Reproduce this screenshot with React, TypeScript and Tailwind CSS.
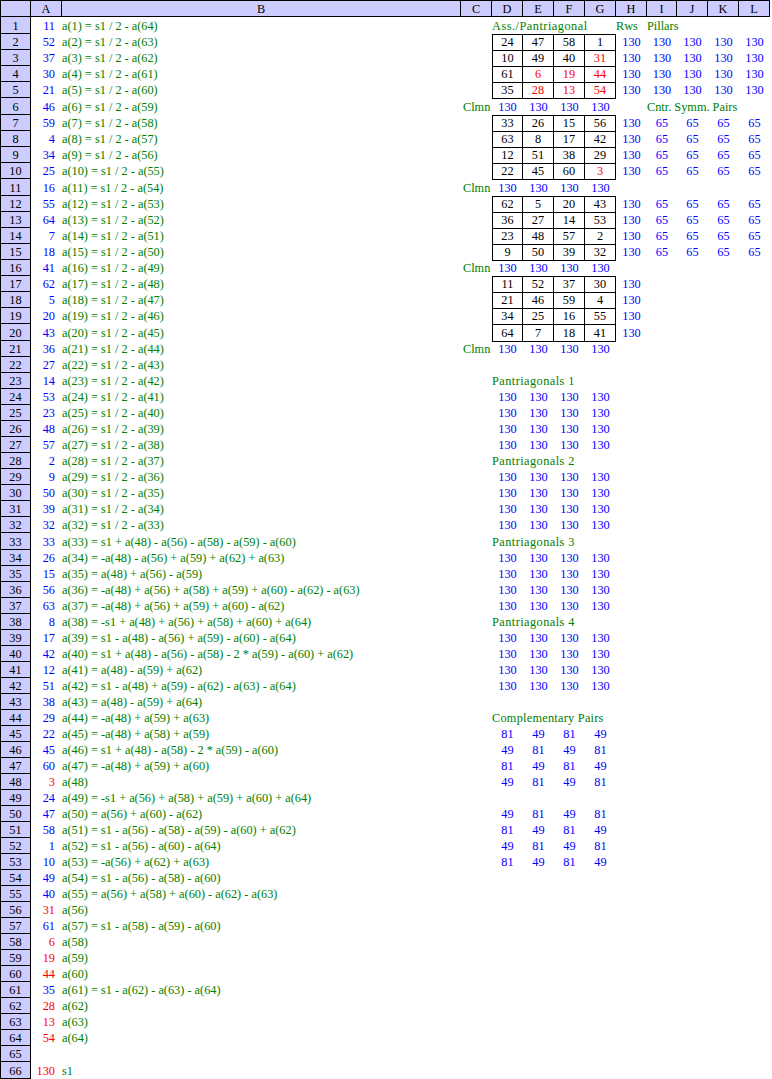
const COLS = ['A', 'B', 'C', 'D', 'E', 'F', 'G', 'H', 'I', 'J', 'K', 'L'];

const GRID = 'grid grid-cols-[31px_31px_399px_31px_31px_31px_31px_31px_31px_30px_31px_31px_31px]';

const A_VALUES = [
  11, 52, 37, 30, 21, 46, 59, 4, 34, 25, 16, 55, 64, 7, 18, 41, 62, 5, 20, 43, 36, 27, 14, 53, 23, 48, 57, 2, 9, 50, 39, 32,
  33, 26, 15, 56, 63, 8, 17, 42, 12, 51, 38, 29, 22, 45, 60, 3, 24, 47, 58, 1, 10, 49, 40, 31, 61, 6, 19, 44, 35, 28, 13, 54,
];
const RED_A = [48, 56, 58, 59, 60, 62, 63, 64];

const FORMULAS: Record<number, string> = {
  33: 'a(33) = s1 + a(48) - a(56) - a(58) - a(59) - a(60)',
  34: 'a(34) = -a(48) - a(56) + a(59) + a(62) + a(63)',
  35: 'a(35) = a(48) + a(56) - a(59)',
  36: 'a(36) = -a(48) + a(56) + a(58) + a(59) + a(60) - a(62) - a(63)',
  37: 'a(37) = -a(48) + a(56) + a(59) + a(60) - a(62)',
  38: 'a(38) = -s1 + a(48) + a(56) + a(58) + a(60) + a(64)',
  39: 'a(39) = s1 - a(48) - a(56) + a(59) - a(60) - a(64)',
  40: 'a(40) = s1 + a(48) - a(56) - a(58) - 2 * a(59) - a(60) + a(62)',
  41: 'a(41) = a(48) - a(59) + a(62)',
  42: 'a(42) = s1 - a(48) + a(59) - a(62) - a(63) - a(64)',
  43: 'a(43) = a(48) - a(59) + a(64)',
  44: 'a(44) = -a(48) + a(59) + a(63)',
  45: 'a(45) = -a(48) + a(58) + a(59)',
  46: 'a(46) = s1 + a(48) - a(58) - 2 * a(59) - a(60)',
  47: 'a(47) = -a(48) + a(59) + a(60)',
  48: 'a(48)',
  49: 'a(49) = -s1 + a(56) + a(58) + a(59) + a(60) + a(64)',
  50: 'a(50) = a(56) + a(60) - a(62)',
  51: 'a(51) = s1 - a(56) - a(58) - a(59) - a(60) + a(62)',
  52: 'a(52) = s1 - a(56) - a(60) - a(64)',
  53: 'a(53) = -a(56) + a(62) + a(63)',
  54: 'a(54) = s1 - a(56) - a(58) - a(60)',
  55: 'a(55) = a(56) + a(58) + a(60) - a(62) - a(63)',
  56: 'a(56)',
  57: 'a(57) = s1 - a(58) - a(59) - a(60)',
  58: 'a(58)',
  59: 'a(59)',
  60: 'a(60)',
  61: 'a(61) = s1 - a(62) - a(63) - a(64)',
  62: 'a(62)',
  63: 'a(63)',
  64: 'a(64)',
  66: 's1',
};

// magic square blocks, negative = red (input) cell
const SQUARE: Record<number, number[]> = {
  2: [24, 47, 58, 1],
  3: [10, 49, 40, -31],
  4: [61, -6, -19, -44],
  5: [35, -28, -13, -54],
  7: [33, 26, 15, 56],
  8: [63, 8, 17, 42],
  9: [12, 51, 38, 29],
  10: [22, 45, 60, -3],
  12: [62, 5, 20, 43],
  13: [36, 27, 14, 53],
  14: [23, 48, 57, 2],
  15: [9, 50, 39, 32],
  17: [11, 52, 37, 30],
  18: [21, 46, 59, 4],
  19: [34, 25, 16, 55],
  20: [64, 7, 18, 41],
};

const CLMN_ROWS = [6, 11, 16, 21];
const TALL_ROWS = [1, 6, 11, 20, 33, 66];

const D_LABELS: Record<number, { text: string; tracking: string }> = {
  1: { text: 'Ass./Pantriagonal', tracking: 'tracking-[0.5px]' },
  23: { text: 'Pantriagonals 1', tracking: 'tracking-[0.45px]' },
  28: { text: 'Pantriagonals 2', tracking: 'tracking-[0.45px]' },
  33: { text: 'Pantriagonals 3', tracking: 'tracking-[0.45px]' },
  38: { text: 'Pantriagonals 4', tracking: 'tracking-[0.45px]' },
  44: { text: 'Complementary Pairs', tracking: 'tracking-[0.25px]' },
};

const PAIRS: Record<number, number[]> = {
  45: [81, 49, 81, 49],
  46: [49, 81, 49, 81],
  47: [81, 49, 81, 49],
  48: [49, 81, 49, 81],
  50: [49, 81, 49, 81],
  51: [81, 49, 81, 49],
  52: [49, 81, 49, 81],
  53: [81, 49, 81, 49],
};

const PANTRI_ROWS = [24, 25, 26, 27, 29, 30, 31, 32, 34, 35, 36, 37, 39, 40, 41, 42];

function Label({ text, className = '' }: { text: string; className?: string }) {
  return <div className={`flex items-end pb-[2px] whitespace-nowrap text-[#008000] ${className}`}>{text}</div>;
}

function Num({ value, className = '' }: { value: number; className?: string }) {
  return <div className={`flex items-end justify-center pb-[2px] text-[#0000ff] ${className}`}>{value}</div>;
}

function SquareCell({ value, first }: { value: number; first: boolean }) {
  return (
    <div
      className={`flex items-end justify-center pb-[2px] border-t border-r border-black ${first ? 'border-l' : ''} ${value < 0 ? 'text-[#ff0000]' : 'text-black'}`}
    >
      {Math.abs(value)}
    </div>
  );
}

function RightPart({ row }: { row: number }) {
  const square = SQUARE[row];
  const isClmn = CLMN_ROWS.includes(row);
  const label = D_LABELS[row];

  let dg = null;
  let rest = null;

  if (square) {
    dg = square.map((v, i) => <SquareCell key={i} value={v} first={i === 0} />);
  } else if (isClmn) {
    dg = [0, 1, 2, 3].map((i) => <Num key={i} value={130} className="border-t border-black" />);
  } else if (PANTRI_ROWS.includes(row)) {
    dg = [0, 1, 2, 3].map((i) => <Num key={i} value={130} />);
  } else if (PAIRS[row]) {
    dg = PAIRS[row].map((v, i) => <Num key={i} value={v} />);
  } else {
    dg = <div className="col-span-4 flex">{label && <Label text={label.text} className={label.tracking} />}</div>;
  }

  if (row === 1) {
    rest = (
      <>
        <Label text="Rws" />
        <Label text="Pillars" />
      </>
    );
  } else if (row >= 2 && row <= 5) {
    rest = [0, 1, 2, 3, 4].map((i) => <Num key={i} value={130} />);
  } else if (row === 6) {
    rest = (
      <>
        <div />
        <Label text="Cntr. Symm. Pairs" />
      </>
    );
  } else if ((row >= 7 && row <= 10) || (row >= 12 && row <= 15)) {
    rest = (
      <>
        <Num value={130} />
        {[0, 1, 2, 3].map((i) => (
          <Num key={i} value={65} />
        ))}
      </>
    );
  } else if (row >= 17 && row <= 20) {
    rest = <Num value={130} />;
  }

  return (
    <>
      {isClmn ? <Label text="Clmn" className="pl-[2px]" /> : <div />}
      {dg}
      {rest}
    </>
  );
}

function Row({ row }: { row: number }) {
  const value = row === 66 ? 130 : A_VALUES[row - 1];
  const red = row === 66 || RED_A.includes(row);
  const formula = row <= 32 ? `a(${row}) = s1 / 2 - a(${65 - row})` : FORMULAS[row];

  return (
    <div className={`${GRID} ${TALL_ROWS.includes(row) ? 'h-[17px]' : 'h-4'}`}>
      <div className="flex items-end justify-center pb-px bg-[#ccccff] text-black border-l border-r border-b border-black">
        {row}
      </div>
      <div className={`flex items-end justify-end pb-[2px] pr-[7px] ${red ? 'text-[#ff0000]' : 'text-[#0000ff]'}`}>{value}</div>
      <div className="flex items-end pb-[2px] whitespace-nowrap text-[#008000]">{formula}</div>
      <RightPart row={row} />
    </div>
  );
}

export default function App() {
  const rows = Array.from({ length: 66 }, (_, i) => i + 1);

  return (
    <div className="w-[772px] h-[1079px] overflow-hidden bg-white font-['Liberation_Serif',serif] text-[12.3px] leading-none">
      <div className={`${GRID} h-[17px]`}>
        <div className="bg-[#ccccff] border-l border-r border-t border-b border-black" />
        {COLS.map((c) => (
          <div
            key={c}
            className="flex items-center justify-center pt-px bg-[#ccccff] text-black border-r border-t border-b border-black"
          >
            {c}
          </div>
        ))}
      </div>
      {rows.map((r) => (
        <Row key={r} row={r} />
      ))}
    </div>
  );
}
